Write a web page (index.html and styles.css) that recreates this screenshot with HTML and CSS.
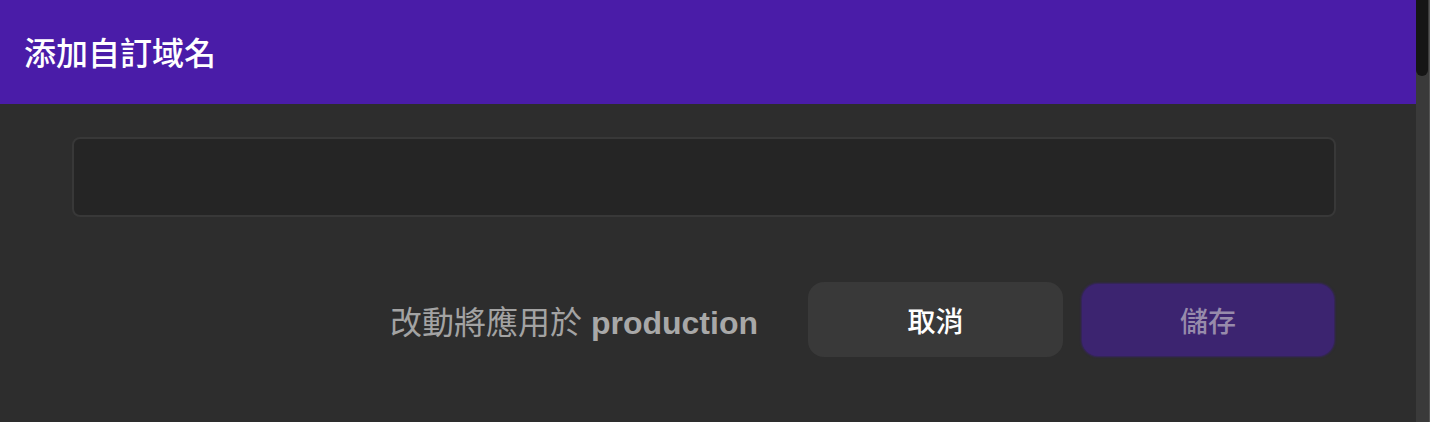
FILE: index.html
```html
<!DOCTYPE html>
<html lang="zh-Hant">
<head>
<meta charset="utf-8">
<link rel="stylesheet" href="styles.css">
</head>
<body>
<div class="frame">
  <div class="dialog">
    <header class="header">
      <h1 class="title">添加自訂域名</h1>
    </header>
    <div class="content">
      <input class="field" type="text" aria-label="域名">
      <div class="footer">
        <span class="note">改動將應用於 <b class="env">production</b></span>
        <button class="btn btn-cancel">取消</button>
        <button class="btn btn-save">儲存</button>
      </div>
    </div>
  </div>
  <div class="scrollbar"><div class="thumb"></div></div>
</div>
</body>
</html>
```

FILE: styles.css
```css
html, body {
  margin: 0;
  padding: 0;
  background: #2d2d2d;
  height: 100%;
  overflow: hidden;
}
body {
  font-family: "Liberation Sans", "Noto Sans CJK TC", sans-serif;
}
.frame {
  display: flex;
  height: 422px;
}
.dialog {
  flex: 1;
  display: flex;
  flex-direction: column;
  background: #2d2d2d;
}
.header {
  height: 104px;
  background: #4a1ca8;
  display: flex;
  align-items: center;
  padding-left: 24px;
}
.title {
  margin: 0;
  color: #ffffff;
  font-size: 32px;
  font-weight: 500;
  font-family: "Noto Sans CJK TC", sans-serif;
  padding-bottom: 2px;
}
.content {
  padding: 33px 80px 0 72px;
  display: flex;
  flex-direction: column;
}
.field {
  box-sizing: border-box;
  height: 80px;
  width: 100%;
  background: #252525;
  border: 2px solid #383838;
  border-radius: 8px;
  outline: none;
  margin: 0;
}
.footer {
  margin-top: 65px;
  display: flex;
  justify-content: flex-end;
  align-items: center;
  gap: 19px;
}
.note {
  color: #a3a3a3;
  font-size: 32px;
  font-family: "Liberation Sans", "Noto Sans CJK TC", sans-serif;
  margin-right: 31px;
}
.env {
  font-weight: 700;
  color: #a8a8a8;
}
.btn {
  width: 255px;
  height: 75px;
  border: none;
  border-radius: 16px;
  font-family: "Noto Sans CJK TC", sans-serif;
  font-size: 28px;
  font-weight: 500;
  padding: 0;
}
.btn-cancel {
  background: #393939;
  color: #ffffff;
}
.btn-save {
  width: 252px;
  height: 72px;
  margin-right: 2px;
  background: #3c2470;
  color: #978bab;
  box-shadow: 0 0 2px 1px #382466;
}
.scrollbar {
  width: 14px;
  background: #3a3a3a;
  border-right: 1px solid #555;
  box-sizing: border-box;
}
.thumb {
  margin: 0 1px 0 0;
  height: 76px;
  background: #151515;
  border-radius: 0 0 6px 6px;
}
```
